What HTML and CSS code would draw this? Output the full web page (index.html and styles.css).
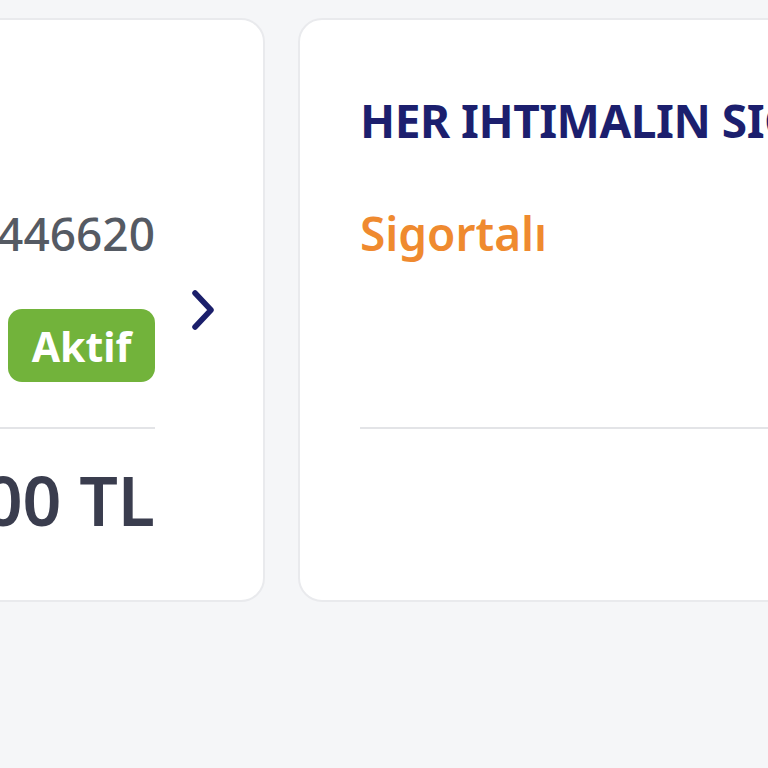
FILE: index.html
```html
<!DOCTYPE html>
<html lang="tr">
<head>
<meta charset="utf-8">
<title>Poliçeler</title>
<link rel="stylesheet" href="styles.css">
</head>
<body>
<div class="stage">
  <div class="card card-left">
    <div class="content">
      <div class="title">&nbsp;</div>
      <div class="info info-end"><span class="number">123446620</span></div>
      <div class="badge-row"><span class="badge">Aktif</span></div>
      <div class="divider"></div>
      <div class="price"><span>1.250,00 TL</span></div>
    </div>
    <div class="aside">
      <svg class="chevron" width="26" height="40" viewBox="0 0 26 40">
        <path d="M4 3 L20 20 L4 37" fill="none" stroke="#1b1f6b" stroke-width="5.5" stroke-linecap="round" stroke-linejoin="round"/>
      </svg>
    </div>
  </div>
  <div class="card card-right">
    <div class="content">
      <div class="title">HER IHTIMALIN SIGORTASI</div>
      <div class="info"><span class="insured">Sigortalı</span></div>
      <div class="badge-row"></div>
      <div class="divider"></div>
      <div class="price">&nbsp;</div>
    </div>
  </div>
</div>
</body>
</html>
```

FILE: styles.css
```css
html, body {
  margin: 0;
  padding: 0;
}
body {
  background: #f5f6f8;
  font-family: "Noto Sans", "Open Sans", sans-serif;
  overflow: hidden;
  width: 768px;
  height: 768px;
}
.stage {
  display: flex;
  gap: 33px;
  margin-left: -165px;
  padding-top: 18px;
}
.card {
  flex-shrink: 0;
  box-sizing: border-box;
  height: 584px;
  background: #ffffff;
  border: 2px solid #e9eaed;
  border-radius: 24px;
  display: flex;
  padding: 72px 0 0 60px;
}
.card-left {
  width: 430px;
}
.card-right {
  width: 560px;
}
.content {
  display: flex;
  flex-direction: column;
  width: 258px;
}
.card-right .content {
  width: 460px;
}
.title {
  font-size: 46px;
  line-height: 56px;
  font-weight: 700;
  color: #1c1f6e;
  white-space: nowrap;
  letter-spacing: -0.5px;
}
.info {
  margin-top: 57px;
  font-size: 46px;
  line-height: 56px;
  display: flex;
  white-space: nowrap;
}
.info-end {
  justify-content: flex-end;
}
.number {
  color: #555a63;
  font-weight: 500;
}
.insured {
  color: #ef8a2f;
  font-weight: 600;
}
.badge-row {
  margin-top: 48px;
  height: 73px;
  display: flex;
  justify-content: flex-end;
}
.badge {
  display: inline-flex;
  align-items: center;
  box-sizing: border-box;
  height: 73px;
  width: 147px;
  justify-content: center;
  background: #72b33b;
  color: #ffffff;
  font-size: 41px;
  font-weight: 700;
  border-radius: 14px;
}
.divider {
  margin-top: 45px;
  height: 2px;
  background: #e3e4e7;
}
.price {
  margin-top: 31px;
  font-size: 68px;
  line-height: 80px;
  font-weight: 600;
  color: #3a3d4e;
  display: flex;
  justify-content: flex-end;
  white-space: nowrap;
}
.aside {
  width: 108px;
  display: flex;
  align-items: center;
  padding-left: 36px;
  box-sizing: border-box;
  margin-top: -72px;
}
.chevron {
  display: block;
}
```
